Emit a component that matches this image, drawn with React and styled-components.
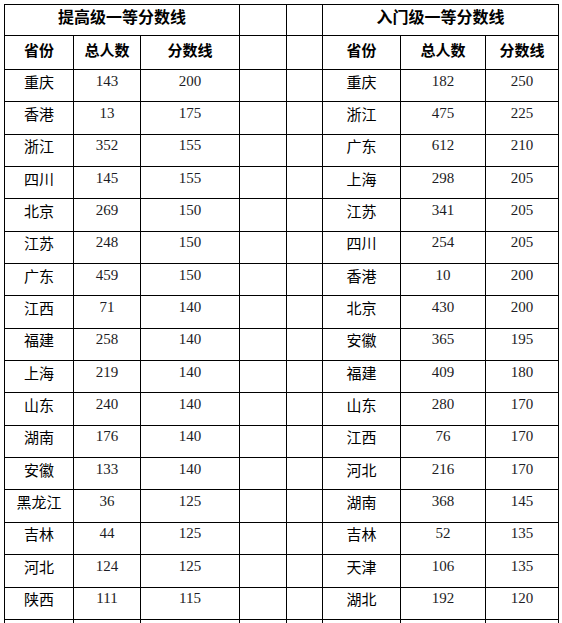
import React from 'react';
import styled, { createGlobalStyle } from 'styled-components';

const GlobalStyle = createGlobalStyle`
  body {
    margin: 0;
    background: #fff;
  }
`;

const Page = styled.div`
  padding: 4px;
`;

const Table = styled.table`
  border-collapse: collapse;
  table-layout: fixed;
  width: 554px;
  color: #000;
`;

const Row = styled.tr`
  height: ${props => props.h}px;
`;

const Cell = styled.td`
  border: 1px solid #000;
  padding: 0 0 ${props => props.pb || 9}px 0;
  text-align: center;
  vertical-align: middle;
  font-family: ${props => (props.num
    ? '"Liberation Serif", "Times New Roman", serif'
    : '"Noto Sans CJK SC", sans-serif')};
  font-size: ${props => props.size || 15}px;
  font-weight: ${props => (props.bold ? 700 : 400)};
  line-height: 1;
  color: ${props => (props.num ? '#1c1c24' : '#000')};
`;

const widths = [69, 67, 99, 47, 36, 78, 85, 73];

const left = [
  ['重庆', 143, 200], ['香港', 13, 175], ['浙江', 352, 155], ['四川', 145, 155],
  ['北京', 269, 150], ['江苏', 248, 150], ['广东', 459, 150], ['江西', 71, 140],
  ['福建', 258, 140], ['上海', 219, 140], ['山东', 240, 140], ['湖南', 176, 140],
  ['安徽', 133, 140], ['黑龙江', 36, 125], ['吉林', 44, 125], ['河北', 124, 125],
  ['陕西', 111, 115],
];

const right = [
  ['重庆', 182, 250], ['浙江', 475, 225], ['广东', 612, 210], ['上海', 298, 205],
  ['江苏', 341, 205], ['四川', 254, 205], ['香港', 10, 200], ['北京', 430, 200],
  ['安徽', 365, 195], ['福建', 409, 180], ['山东', 280, 170], ['江西', 76, 170],
  ['河北', 216, 170], ['湖南', 368, 145], ['吉林', 52, 135], ['天津', 106, 135],
  ['湖北', 192, 120],
];

const Side = ({ item }) => (
  <>
    <Cell>{item ? item[0] : ''}</Cell>
    <Cell num>{item ? item[1] : ''}</Cell>
    <Cell num>{item ? item[2] : ''}</Cell>
  </>
);

const App = () => (
  <Page>
    <GlobalStyle />
    <Table>
      <colgroup>
        {widths.map((w, i) => <col key={i} style={{ width: w }} />)}
      </colgroup>
      <tbody>
        <Row h={31}>
          <Cell colSpan={3} bold size={16} pb={8}>提高级一等分数线</Cell>
          <Cell />
          <Cell />
          <Cell colSpan={3} bold size={16} pb={8}>入门级一等分数线</Cell>
        </Row>
        <Row h={34}>
          <Cell bold pb={7}>省份</Cell>
          <Cell bold pb={7}>总人数</Cell>
          <Cell bold pb={7}>分数线</Cell>
          <Cell />
          <Cell />
          <Cell bold pb={7}>省份</Cell>
          <Cell bold pb={7}>总人数</Cell>
          <Cell bold pb={7}>分数线</Cell>
        </Row>
        {left.map((l, i) => (
          <Row h={32.35} key={l[0]}>
            <Side item={l} />
            <Cell />
            <Cell />
            <Side item={right[i]} />
          </Row>
        ))}
        <Row h={32}>
          <Side />
          <Cell />
          <Cell />
          <Side />
        </Row>
      </tbody>
    </Table>
  </Page>
);

export default App;
